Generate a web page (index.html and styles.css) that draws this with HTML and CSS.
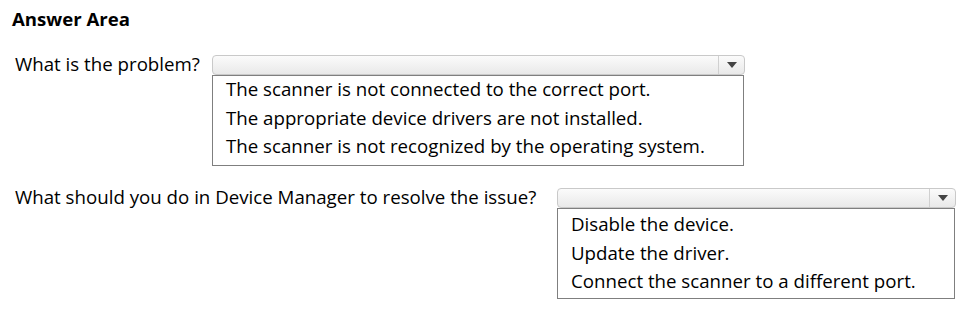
FILE: index.html
```html
<!DOCTYPE html>
<html lang="en">
<head>
<meta charset="utf-8">
<title>Answer Area</title>
<link rel="stylesheet" href="styles.css">
</head>
<body>
<div class="area">
  <h1 class="title">Answer Area</h1>
  <div class="question q1">
    <div class="label">What is the problem?</div>
    <div class="dropdown dd1">
      <div class="select"><span class="btn"><svg width="10" height="6" viewBox="0 0 10 6"><path d="M0 0H10L5 6Z" fill="#444"/></svg></span></div>
      <ul class="list">
        <li>The scanner is not connected to the correct port.</li>
        <li>The appropriate device drivers are not installed.</li>
        <li>The scanner is not recognized by the operating system.</li>
      </ul>
    </div>
  </div>
  <div class="question q2">
    <div class="label">What should you do in Device Manager to resolve the issue?</div>
    <div class="dropdown dd2">
      <div class="select"><span class="btn"><svg width="10" height="6" viewBox="0 0 10 6"><path d="M0 0H10L5 6Z" fill="#444"/></svg></span></div>
      <ul class="list">
        <li>Disable the device.</li>
        <li>Update the driver.</li>
        <li>Connect the scanner to a different port.</li>
      </ul>
    </div>
  </div>
</div>
</body>
</html>
```

FILE: styles.css
```css
* { box-sizing: border-box; }
html, body { margin: 0; padding: 0; background: #fff; }
body {
  font-family: "Open Sans", "Noto Sans", "Liberation Sans", sans-serif;
  color: #000;
  width: 964px;
  height: 314px;
  overflow: hidden;
}
.area { padding: 7px 0 0 12px; }
.title {
  margin: 0;
  font-size: 18.6px;
  font-weight: 700;
  line-height: 24px;
}
.question {
  display: flex;
  align-items: flex-start;
  margin-left: 3px;
}
.q1 { margin-top: 24px; }
.q2 { margin-top: 22px; }
.label {
  font-size: 18.7px;
  line-height: 18px;
}
.q1 .label { width: 197px; }
.q2 .label { width: 542px; }
.dropdown { display: flex; flex-direction: column; }
.dd1 { width: 533px; }
.dd2 { width: 399px; }
.select {
  height: 20px;
  border: 1px solid #c9c9c9;
  border-radius: 4px;
  background: linear-gradient(#fbfbfb, #e9e9e9);
  display: flex;
  justify-content: flex-end;
}
.btn {
  width: 26px;
  border-left: 1px solid #d0d0d0;
  display: flex;
  align-items: center;
  justify-content: center;
}
.list {
  list-style: none;
  margin: 0 1px 0 0;
  padding: 1px 0 2px;
  border: 1px solid #7f7f7f;
  background: #fff;
  height: 91px;
}
.list li {
  font-size: 18.7px;
  height: 28.5px;
  line-height: 28px;
  padding-left: 13px;
  white-space: nowrap;
}
.dd1 .list li { line-height: 24px; }
```
